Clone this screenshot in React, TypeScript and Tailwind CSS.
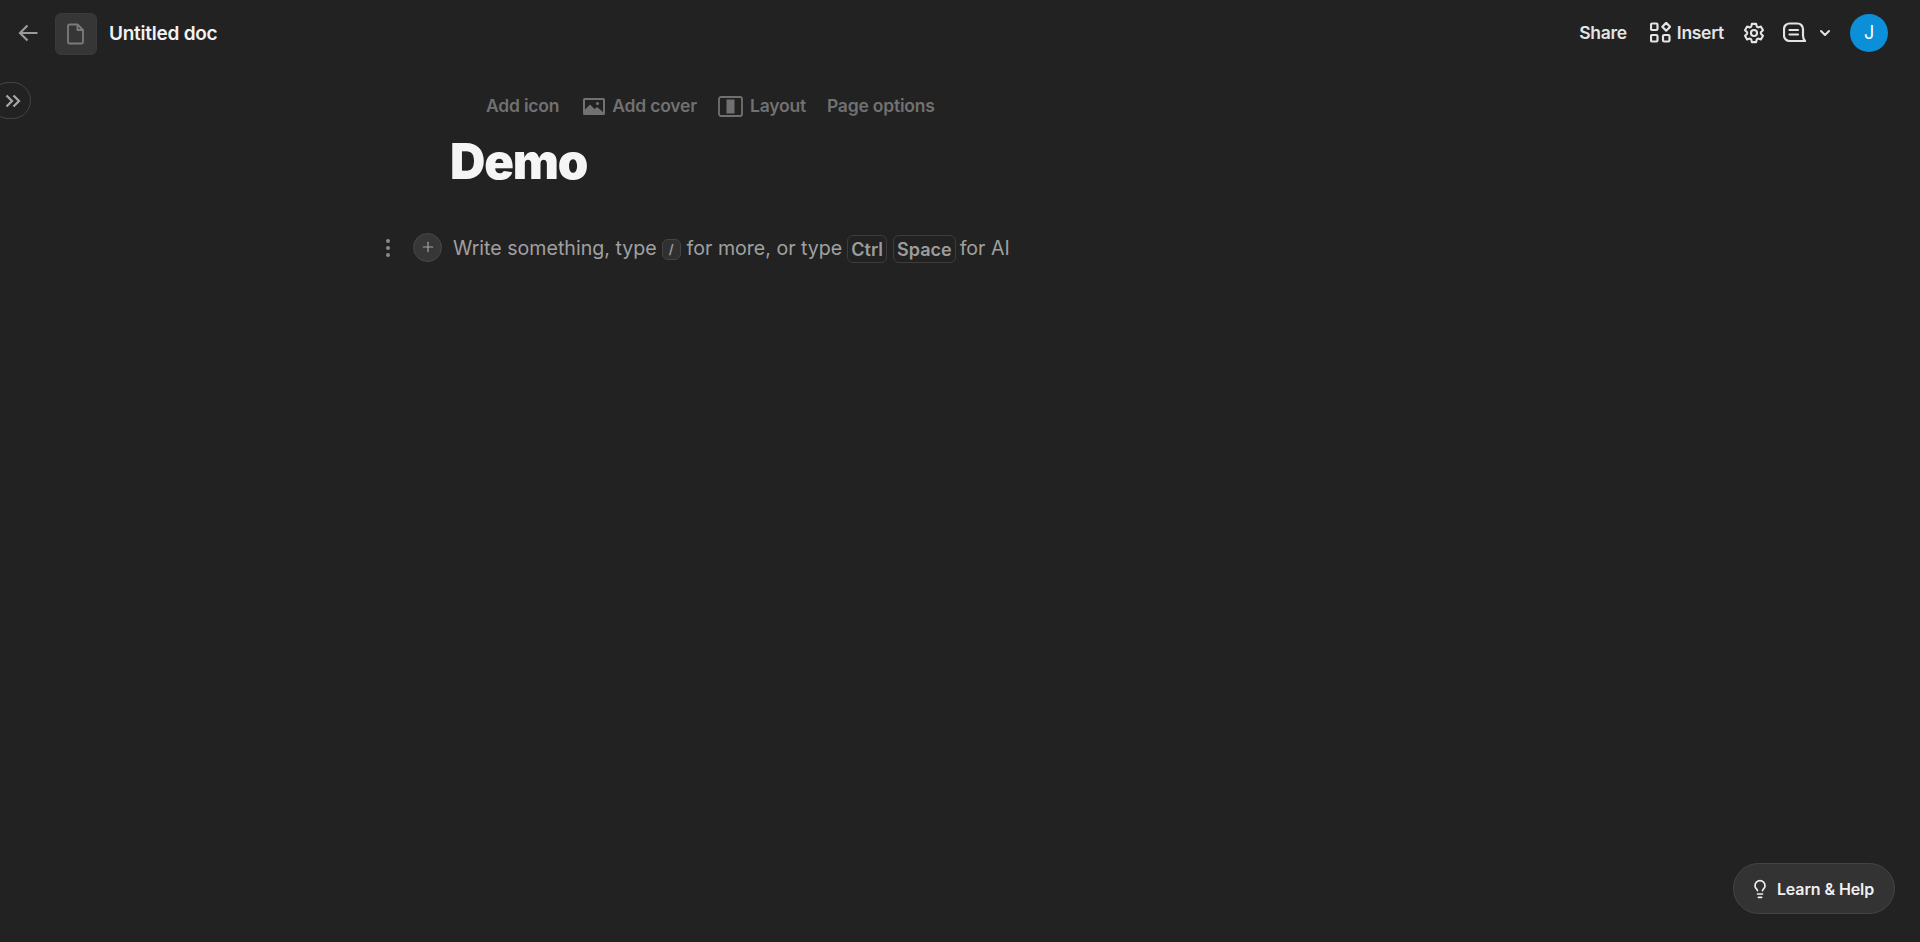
import { ChevronDown, Lightbulb, Plus } from "lucide-react";

const font = { fontFamily: "Inter, 'Liberation Sans', sans-serif" };

export default function App() {
  return (
    <div style={font} className="relative h-[942px] overflow-hidden bg-[#222222] text-white">
      <Header />
      <button className="absolute left-[-10px] top-[82px] flex h-[37px] w-[41px] items-center justify-end rounded-full border border-[#454545] pr-[9px] text-[#a8a8a8]">
        <DoubleChevron />
      </button>
      <main className="pt-[23px]">
        <PageOptions />
        <h1 className="mt-[8px] pl-[450px] text-[49px] leading-[60px] font-black tracking-[-1.2px] text-[#f5f5f5]">
          Demo
        </h1>
        <EmptyLine />
      </main>
      <button className="absolute right-[25px] bottom-[28px] flex h-[51px] w-[162px] items-center justify-center gap-[7px] rounded-full border border-[#444444] bg-[#333333] pr-[4px] text-[16px] font-semibold tracking-[-0.1px] text-[#f0f0f0]">
        <Lightbulb size={20} strokeWidth={2} />
        Learn &amp; Help
      </button>
    </div>
  );
}

function Header() {
  return (
    <header className="flex h-[65px] items-center pr-[32px] pl-[18px]">
      <BackArrow />
      <div className="mt-[3px] ml-[17px] flex h-[42px] w-[42px] items-center justify-center rounded-[6px] border border-[#3a3a3a] bg-[#363636]">
        <DocIcon />
      </div>
      <span className="mt-[3px] ml-[12px] text-[19px] font-semibold tracking-[-0.25px] text-[#f2f2f2]">Untitled doc</span>

      <div className="ml-auto flex items-center text-[17.5px] font-semibold tracking-[-0.3px] text-[#e4e4e4]">
        <span className="mt-[2px]">Share</span>
        <InsertIcon />
        <span className="mt-[2px] ml-[6px]">Insert</span>
        <GearIcon />
        <CommentIcon />
        <ChevronDown size={16} strokeWidth={3} className="ml-[11px]" />
        <div className="ml-[17px] flex h-[38px] w-[38px] items-center justify-center rounded-full bg-[#0a8fd8] text-[18px] font-normal text-white">
          J
        </div>
      </div>
    </header>
  );
}

function PageOptions() {
  return (
    <div className="flex h-[36px] items-center pl-[486px] text-[17.5px] font-semibold tracking-[-0.2px] text-[#717171]">
      <span>Add icon</span>
      <ImageIcon />
      <span className="ml-[7px]">Add cover</span>
      <LayoutIcon />
      <span className="ml-[7px]">Layout</span>
      <span className="ml-[21px]">Page options</span>
    </div>
  );
}

function EmptyLine() {
  return (
    <div className="mt-[42px] flex h-[30px] items-center pl-[385px] text-[19.6px] text-[#a0a0a0]">
      <div className="mt-[-3px] flex w-[6px] flex-col items-center gap-[3px]">
        <i className="h-[4px] w-[4px] rounded-full bg-[#8a8a8a]" />
        <i className="h-[4px] w-[4px] rounded-full bg-[#8a8a8a]" />
        <i className="h-[4px] w-[4px] rounded-full bg-[#8a8a8a]" />
      </div>
      <div className="mt-[-4px] ml-[22px] flex h-[29px] w-[29px] items-center justify-center rounded-full border border-[#484848] bg-[#373737] text-[#a5a5a5]">
        <Plus size={16} strokeWidth={1.75} />
      </div>
      <span className="ml-[11px]">Write something, type</span>
      <Kbd className="ml-[5px] h-[21px] border-[#444444] bg-[#303030] px-[6px] text-[13px] font-normal">/</Kbd>
      <span className="ml-[6px]">for more, or type</span>
      <Kbd className="ml-[5px] h-[28px] border-[#3c3c3c] px-[3px] text-[18px]">Ctrl</Kbd>
      <Kbd className="ml-[6px] h-[28px] border-[#3c3c3c] px-[3px] text-[18px]">Space</Kbd>
      <span className="ml-[4px]">for AI</span>
    </div>
  );
}

function Kbd({ className, children }: { className: string; children: React.ReactNode }) {
  return (
    <span className={`flex items-center rounded-[6px] border pt-[1px] font-semibold text-[#9c9c9c] ${className}`}>
      {children}
    </span>
  );
}

function DoubleChevron() {
  return (
    <svg width="16" height="14" viewBox="0 0 16 14" fill="none" stroke="currentColor" strokeWidth="2.200">
      <path d="M1.500 1.500L7 7l-5.500 5.500M8.500 1.500L14 7l-5.500 5.500" />
    </svg>
  );
}

function BackArrow() {
  return (
    <svg width="20" height="18" viewBox="0 0 20 18" fill="none" stroke="#9a9a9a" strokeWidth="2.200">
      <path d="M9.500 1.500L2 9l7.500 7.500M2 9h17.500" />
    </svg>
  );
}

function DocIcon() {
  return (
    <svg width="18" height="22" viewBox="0 0 18 22" fill="none" stroke="#7c7c7c" strokeWidth="1.800" strokeLinejoin="round">
      <path d="M2.500 1.500h8l5.500 5.500v12a1.500 1.500 0 0 1-1.500 1.500h-12A1.500 1.500 0 0 1 1 19V3a1.500 1.500 0 0 1 1.500-1.500z" />
      <path d="M10.500 1.500V7H16" />
    </svg>
  );
}

function InsertIcon() {
  return (
    <svg width="21" height="21" viewBox="0 0 21 21" fill="none" stroke="currentColor" strokeWidth="2.200" className="ml-[23px]">
      <rect x="1" y="1.500" width="6.500" height="6.500" rx="1.200" />
      <rect x="1" y="13" width="6.500" height="6.500" rx="1.200" />
      <rect x="13" y="13" width="6.500" height="6.500" rx="1.200" />
      <path d="M16.200 0.900l3.900 3.900-3.900 3.900-3.900-3.900z" strokeLinejoin="round" />
    </svg>
  );
}

function GearIcon() {
  return (
    <svg width="22" height="22" viewBox="0 0 24 24" fill="none" stroke="currentColor" strokeWidth="2.300" strokeLinejoin="round" className="ml-[19px]">
      <path d="M9.700 2h4.600l.7 3 1.500.9 3-.9 2.300 4-2.300 2.100v1.800l2.300 2.100-2.300 4-3-.9-1.500.9-.7 3H9.700l-.7-3-1.500-.9-3 .9-2.300-4 2.300-2.100v-1.800L2.200 9l2.300-4 3 .9 1.500-.9z" />
      <circle cx="12" cy="12" r="3.300" />
    </svg>
  );
}

function CommentIcon() {
  return (
    <svg width="23" height="21" viewBox="0 0 23 21" fill="none" stroke="currentColor" strokeWidth="2.200" strokeLinecap="round" className="ml-[18px]">
      <path d="M6.500 1.500h8a5.500 5.500 0 0 1 5.500 5.500v6.500c0 2.500.8 4.300 2 5.500H6.500A5.500 5.500 0 0 1 1 13.500V7a5.500 5.500 0 0 1 5.500-5.500z" />
      <path d="M6.500 8h8.500M6.500 12.500h8.500" />
    </svg>
  );
}

function ImageIcon() {
  return (
    <svg width="22" height="19" viewBox="0 0 22 19" className="ml-[24px]" fill="#717171">
      <path
        fillRule="evenodd"
        d="M1.500 1h19A1.500 1.500 0 0 1 22 2.500v14a1.500 1.500 0 0 1-1.500 1.500h-19A1.500 1.500 0 0 1 0 16.500v-14A1.500 1.500 0 0 1 1.500 1zM2 3v9.500l5-5 4.500 4.500 2.500-2 6 5V3z"
      />
      <circle cx="14.500" cy="6.500" r="1.600" />
    </svg>
  );
}

function LayoutIcon() {
  return (
    <svg width="25" height="21" viewBox="0 0 25 21" fill="none" className="ml-[21px]">
      <rect x="1" y="1" width="23" height="19" rx="2" stroke="#717171" strokeWidth="1.800" />
      <rect x="8.500" y="3.500" width="8" height="14" fill="#717171" />
    </svg>
  );
}
